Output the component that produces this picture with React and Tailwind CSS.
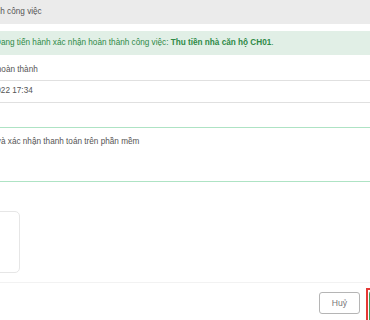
export default function App() {
  return (
    <div className="h-[320px] w-[370px] overflow-hidden bg-white text-[8.2px] text-[#555] font-['Liberation_Sans',Arial,sans-serif]">
      {/* modal header */}
      <div className="flex h-[24px] items-center bg-[#ebebeb]">
        <p className="-ml-[73px] whitespace-nowrap">Xác nhận hoàn thành công việc</p>
      </div>

      {/* alert */}
      <div className="mt-[7px] flex h-[24px] items-center bg-[#e1efe6] text-[#2f8a46]">
        <p className="-ml-[5px] whitespace-nowrap">
          Đang tiến hành xác nhận hoàn thành công việc: <b>Thu tiền nhà căn hộ CH01</b>.
        </p>
      </div>

      {/* completion time */}
      <p className="-ml-[40px] mt-[9px] whitespace-nowrap leading-[12px]">Thời gian hoàn thành</p>
      <div className="mt-[4px] flex h-[23px] items-center border-y border-[#e0e0e0]">
        <span className="-ml-[31px] whitespace-nowrap">20/10/2022 17:34</span>
      </div>

      {/* note */}
      <div className="mt-[24px] h-[55px] border-y border-[#aee3c4] pt-[8px]">
        <p className="-ml-[45px] whitespace-nowrap leading-[12px]">Đã thu tiền và xác nhận thanh toán trên phần mềm</p>
      </div>

      {/* attachment box */}
      <div className="-ml-[40px] mt-[29px] h-[62px] w-[60px] rounded-[5px] border border-[#e6e6e6]" />

      {/* footer */}
      <div className="mt-[9px] border-t border-[#f2f2f2]">
        <div className="flex items-start justify-end gap-[6px] pt-[5px] -mr-[40px]">
          <button className="mt-[4px] h-[22px] w-[41px] rounded-[3px] border border-[#b5b5b5] text-[8.6px] text-[#777]">
            Huỷ
          </button>
          <div className="h-[40px] w-[44px] border-2 border-[#e53935] bg-white p-[1px]">
            <div className="h-full w-full rounded-[3px] bg-[#3aa35b]" />
          </div>
        </div>
      </div>
    </div>
  );
}
